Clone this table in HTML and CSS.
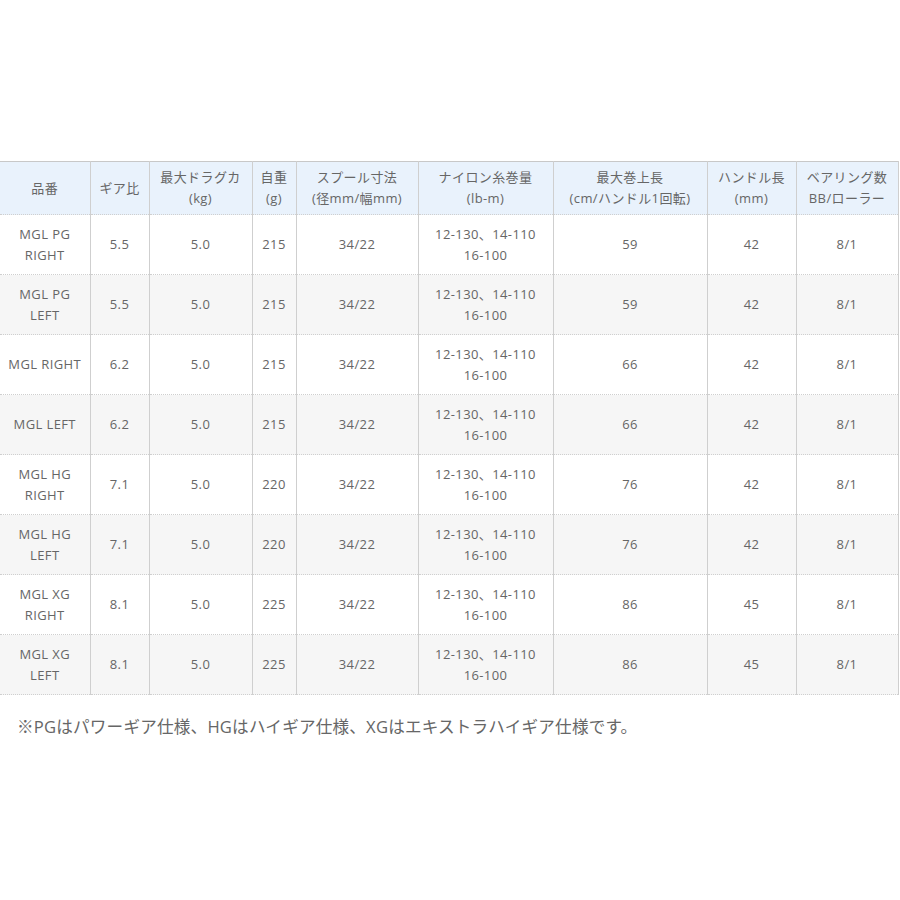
FILE: index.html
```html
<!DOCTYPE html>
<html lang="ja">
<head>
<meta charset="utf-8">
<link rel="stylesheet" href="styles.css">
</head>
<body>
<div class="page">
<table class="spec">
<colgroup>
<col style="width:90px"><col style="width:59px"><col style="width:103px"><col style="width:44px"><col style="width:122px"><col style="width:135px"><col style="width:154px"><col style="width:89px"><col style="width:102px">
</colgroup>
<thead>
<tr>
<th>品番</th><th>ギア比</th><th>最大ドラグカ<br>(kg)</th><th>自重<br>(g)</th><th>スプール寸法<br>(径mm/幅mm)</th><th>ナイロン糸巻量<br>(lb-m)</th><th>最大巻上長<br>(cm/ハンドル1回転)</th><th>ハンドル長<br>(mm)</th><th>ベアリング数<br>BB/ローラー</th>
</tr>
</thead>
<tbody>
<tr><td>MGL PG<br>RIGHT</td><td>5.5</td><td>5.0</td><td>215</td><td>34/22</td><td>12-130、14-110<br>16-100</td><td>59</td><td>42</td><td>8/1</td></tr>
<tr><td>MGL PG<br>LEFT</td><td>5.5</td><td>5.0</td><td>215</td><td>34/22</td><td>12-130、14-110<br>16-100</td><td>59</td><td>42</td><td>8/1</td></tr>
<tr><td>MGL RIGHT</td><td>6.2</td><td>5.0</td><td>215</td><td>34/22</td><td>12-130、14-110<br>16-100</td><td>66</td><td>42</td><td>8/1</td></tr>
<tr><td>MGL LEFT</td><td>6.2</td><td>5.0</td><td>215</td><td>34/22</td><td>12-130、14-110<br>16-100</td><td>66</td><td>42</td><td>8/1</td></tr>
<tr><td>MGL HG<br>RIGHT</td><td>7.1</td><td>5.0</td><td>220</td><td>34/22</td><td>12-130、14-110<br>16-100</td><td>76</td><td>42</td><td>8/1</td></tr>
<tr><td>MGL HG<br>LEFT</td><td>7.1</td><td>5.0</td><td>220</td><td>34/22</td><td>12-130、14-110<br>16-100</td><td>76</td><td>42</td><td>8/1</td></tr>
<tr><td>MGL XG<br>RIGHT</td><td>8.1</td><td>5.0</td><td>225</td><td>34/22</td><td>12-130、14-110<br>16-100</td><td>86</td><td>45</td><td>8/1</td></tr>
<tr><td>MGL XG<br>LEFT</td><td>8.1</td><td>5.0</td><td>225</td><td>34/22</td><td>12-130、14-110<br>16-100</td><td>86</td><td>45</td><td>8/1</td></tr>
</tbody>
</table>
<p class="note">※PGはパワーギア仕様、HGはハイギア仕様、XGはエキストラハイギア仕様です。</p>
</div>
</body>
</html>
```

FILE: styles.css
```css
html, body {
  margin: 0;
  padding: 0;
  background: #fff;
}
.page {
  padding-top: 161px;
  font-family: "Open Sans", "Noto Sans CJK JP", sans-serif;
  color: #666;
}
.spec {
  border-collapse: collapse;
  table-layout: fixed;
  width: 898px;
  font-size: 13px;
  line-height: 21px;
  letter-spacing: 0.4px;
  border-top: 1px solid #c8c8c8;
}
.spec th,
.spec td {
  text-align: center;
  vertical-align: middle;
  border-left: 1px solid #cfcfcf;
  border-right: 1px solid #cfcfcf;
  border-bottom: 1px dotted #cfcfcf;
  padding: 0 1px;
  font-weight: normal;
}
.spec th:first-child,
.spec td:first-child {
  border-left: none;
}
.spec th {
  background: #e9f2fc;
  height: 52px;
}
.spec td {
  height: 59px;
}
.spec tbody tr:nth-child(even) td {
  background: #f6f6f6;
}
.note {
  margin: 20px 0 0 17px;
  font-size: 16.6px;
  letter-spacing: 0.2px;
  line-height: 24px;
}
```
